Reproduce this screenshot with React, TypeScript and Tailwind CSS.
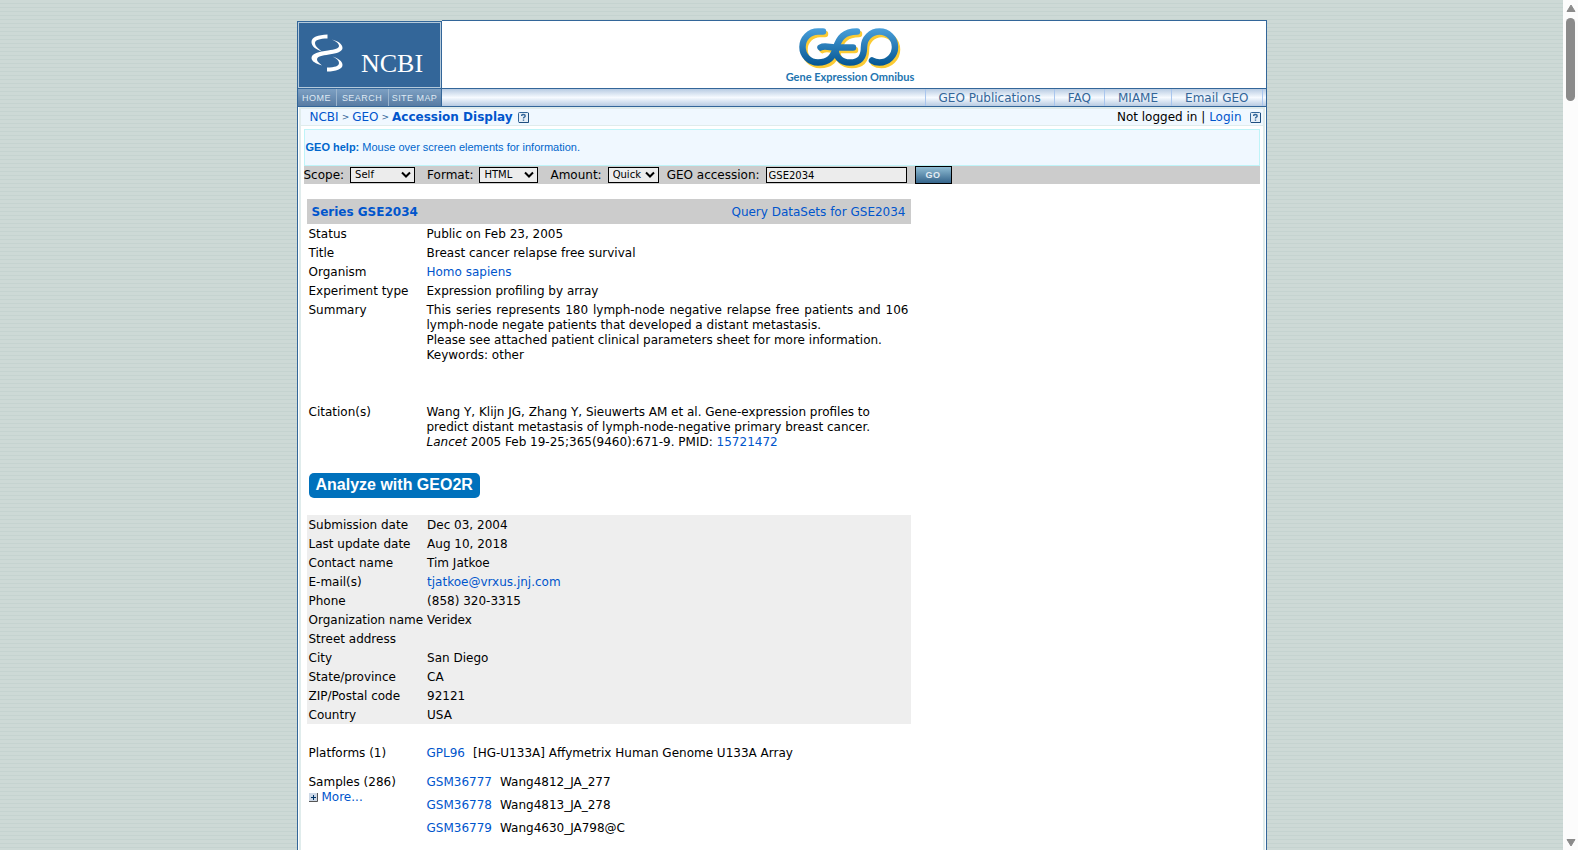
import type {ReactNode} from 'react';

type Row = {label: string; value: ReactNode};

const LINK = 'text-[#0055cc] hover:underline';

const seriesRows: Row[] = [
  {label: 'Status', value: 'Public on Feb 23, 2005'},
  {label: 'Title', value: 'Breast cancer relapse free survival'},
  {label: 'Organism', value: <a href="#organism" className={LINK}>Homo sapiens</a>},
  {label: 'Experiment type', value: 'Expression profiling by array'},
];

const contactRows: Row[] = [
  {label: 'Submission date', value: 'Dec 03, 2004'},
  {label: 'Last update date', value: 'Aug 10, 2018'},
  {label: 'Contact name', value: 'Tim Jatkoe'},
  {
    label: 'E-mail(s)',
    value: <a href="mailto:tjatkoe@vrxus.jnj.com" className={LINK}>tjatkoe@vrxus.jnj.com</a>,
  },
  {label: 'Phone', value: '(858) 320-3315'},
  {label: 'Organization name', value: 'Veridex'},
  {label: 'Street address', value: ''},
  {label: 'City', value: 'San Diego'},
  {label: 'State/province', value: 'CA'},
  {label: 'ZIP/Postal code', value: '92121'},
  {label: 'Country', value: 'USA'},
];

const samples = [
  {id: 'GSM36777', name: 'Wang4812_JA_277'},
  {id: 'GSM36778', name: 'Wang4813_JA_278'},
  {id: 'GSM36779', name: 'Wang4630_JA798@C'},
];

const menuLinks = ['GEO Publications', 'FAQ', 'MIAME', 'Email GEO'];

function HelpIcon() {
  return (
    <svg width="11" height="11" viewBox="0 0 11 11" aria-hidden="true">
      <rect x="0.5" y="0.5" width="10" height="10" rx="1" fill="#e6eff7" stroke="#336699"/>
      <path d="M1 10.5H10.5V1" fill="none" stroke="#1f4f7f"/>
      <path
        d="M3.700 4V3.200Q3.900 2.500 5.400 2.500Q7.200 2.500 7.200 3.900Q7.200 4.700 6.300 5.200Q5.500 5.600 5.500 6.600M5.500 7.600V8.800"
        fill="none"
        stroke="#336699"
        strokeWidth="1.4"
      />
    </svg>
  );
}

function NcbiLogo() {
  return (
    <a
      href="#ncbi"
      aria-label="NCBI"
      className="flex h-[66px] items-center border border-[#b5cadb] bg-[#336699]"
    >
      <svg width="141" height="64" viewBox="0 0 141 64" fill="none" aria-hidden="true">
        <g fill="#fff">
          <path d="M28.500 11.500C19 12 12.500 14 12.500 19C12.500 23.500 17 26.500 23 28.500C19 25.500 16 23 16 20C16 17 20.500 15.500 28.500 15.500Z"/>
          <path d="M33 16.500C37 18.500 40 20.500 40 23C40 25.500 36 26.500 29 27.500C20 28.500 12.500 30.500 12.500 35C12.500 38.500 17 40.500 23 42.500C20 40 18 38.500 18 36.500C18 33.500 23 32.500 30 31.500C38 30.500 43.500 28.500 43.500 25C43.500 21 39 18 33 16.500Z"/>
          <path d="M33.500 33.500C39 35.500 43.500 38 43.500 42C43.500 46 37 48.500 28 48.500V44.500C36 44.500 40 43 40 40C40 37.500 37.500 35.500 33.500 33.500Z"/>
        </g>
        <text x="62" y="49" fill="#fff" fontSize="26" fontFamily="Liberation Serif, serif">
          NCBI
        </text>
      </svg>
    </a>
  );
}

function GeoLogo() {
  const letters = (
    <>
      <path d="M48 6.500H43A15.500 15.500 0 1 0 43 37.500C54 37.500 58 32 61 23C64 13 69 6.500 82 6.500"/>
      <path d="M45.500 22.500C50 20 56 23 61 22.500H78"/>
      <path d="M61 22.500C59 31 66 37.500 75 37.500C86 37.500 89 31 89 22A15.500 15.500 0 1 1 104.500 37.500Q100 37.500 97 35.500"/>
    </>
  );
  return (
    <a href="#geo" aria-label="Gene Expression Omnibus">
      <svg width="150" height="60" viewBox="0 0 150 60" aria-hidden="true">
        <defs>
          <linearGradient id="geo" gradientUnits="userSpaceOnUse" x1="0" y1="3" x2="0" y2="41">
            <stop offset="0" stopColor="#4aa0db"/>
            <stop offset="1" stopColor="#045591"/>
          </linearGradient>
        </defs>
        <g fill="none" strokeWidth="6.5" strokeLinecap="round" strokeLinejoin="round">
          <g stroke="#fbcb33" transform="translate(2 2.500)">{letters}</g>
          <g stroke="url(#geo)">{letters}</g>
        </g>
        <text x="75" y="56" textAnchor="middle" fill="#2274b0" fontSize="11" fontWeight="700" fontFamily="Lato, sans-serif">
          Gene Expression Omnibus
        </text>
      </svg>
    </a>
  );
}

function InfoRow({label, value}: Row) {
  return (
    <tr>
      <th scope="row" className="w-[118px] whitespace-nowrap px-0.5 pt-[3px] pb-px text-left align-top font-normal">
        {label}
      </th>
      <td className="px-0.5 pt-[3px] pb-px align-top">{value}</td>
    </tr>
  );
}

function Header() {
  return (
    <header className="flex">
      <div className="mt-px w-[145px] shrink-0 border border-[#336699]">
        <NcbiLogo/>
        <nav className="flex h-[18px] border-t border-[#336699] bg-linear-to-b from-[#7da0c3] to-[#587ca3] font-['Liberation_Sans',sans-serif] text-[9px] leading-[18px] tracking-wider text-[#dfe9f3]">
          <a href="#home" className="w-[39px] border-r border-[#9ab4cd] text-center">HOME</a>
          <a href="#search" className="w-[52px] border-r border-[#9ab4cd] text-center">SEARCH</a>
          <a href="#map" className="flex-1 text-center">SITE MAP</a>
        </nav>
      </div>
      <div className="flex flex-1 flex-col border-y border-r border-[#336699] bg-white">
        <div className="flex flex-1 items-center justify-center pr-2">
          <GeoLogo/>
        </div>
        <nav className="flex h-[18px] justify-end border-t border-[#336699] bg-linear-to-b from-[#b8cbe2] via-[#f6faff] to-[#b8cbe2] leading-[19px] text-[#336699]">
          {menuLinks.map((label) => (
            <a key={label} href="#menu" className="border-l border-[#a9c6ee] px-[13px]">
              {label}
            </a>
          ))}
          <span className="w-1 border-l border-[#a9c6ee]"/>
        </nav>
      </div>
    </header>
  );
}

function Select({id, value, width}: {id: string; value: string; width: string}) {
  return (
    <span className={`relative h-4 ${width}`}>
      <select
        id={id}
        defaultValue={value}
        className="block h-4 w-full appearance-none border border-black bg-[#ececec] pl-1 text-[10px] leading-[14px]"
      >
        <option>{value}</option>
      </select>
      <svg className="pointer-events-none absolute right-1 top-1" width="10" height="8" viewBox="0 0 10 8" aria-hidden="true">
        <path d="M1 1.500L5 5.500L9 1.500" fill="none" stroke="#000" strokeWidth="2"/>
      </svg>
    </span>
  );
}

function Toolbar() {
  return (
    <form className="flex h-[18px] items-center bg-[#cccccc]" onSubmit={(e) => e.preventDefault()}>
      <label htmlFor="scope">Scope:</label>
      <Select id="scope" value="Self" width="w-[65px] ml-1.5"/>
      <label htmlFor="format" className="ml-3">Format:</label>
      <Select id="format" value="HTML" width="w-[59px] ml-1.5"/>
      <label htmlFor="amount" className="ml-3">Amount:</label>
      <Select id="amount" value="Quick" width="w-[51px] ml-1.5"/>
      <label htmlFor="accession" className="ml-2">GEO accession:</label>
      <input
        id="accession"
        defaultValue="GSE2034"
        className="ml-1.5 h-4 w-[141px] border border-black bg-[#ececec] px-0.5 text-[10px]"
      />
      <button
        type="submit"
        className="ml-2 h-[18px] w-[37px] border border-black bg-linear-to-b from-[#8fbcd3] to-[#35658b] font-['Liberation_Sans',sans-serif] text-[9px] font-bold leading-4 tracking-wider text-[#e4edf3]"
      >
        GO
      </button>
    </form>
  );
}

function SeriesTable() {
  return (
    <div className="mt-[15px] ml-[3px] w-[604px] max-w-full">
      <div className="flex h-[25px] items-center justify-between bg-[#cccccc] px-[5px] pt-px">
        <strong className="text-[#0055cc]">Series GSE2034</strong>
        <a href="#query" className={LINK}>Query DataSets for GSE2034</a>
      </div>
      <table className="w-full border-collapse">
        <tbody>
          {seriesRows.map((row) => <InfoRow key={row.label} {...row}/>)}
          <InfoRow
            label="Summary"
            value={
              <div className="pb-[38px] text-justify">
                This series represents 180 lymph-node negative relapse free patients and 106
                lymph-node negate patients that developed a distant metastasis.
                <br/>
                Please see attached patient clinical parameters sheet for more information.
                <br/>
                Keywords: other
              </div>
            }
          />
          <InfoRow
            label="Citation(s)"
            value={
              <div className="max-w-[460px]">
                Wang Y, Klijn JG, Zhang Y, Sieuwerts AM et al. Gene-expression profiles to predict
                distant metastasis of lymph-node-negative primary breast cancer. <em>Lancet</em>{' '}
                2005 Feb 19-25;365(9460):671-9. PMID:{' '}
                <a href="#pmid" className={LINK}>15721472</a>
              </div>
            }
          />
        </tbody>
      </table>
      <button
        type="button"
        className="mt-[22px] ml-0.5 block h-[25px] rounded-[5px] bg-[#0071bc] px-[7px] pb-0.5 font-['Liberation_Sans',sans-serif] text-base font-bold leading-[22px] text-white"
      >
        Analyze with GEO2R
      </button>
      <table className="mt-[17px] w-full border-collapse bg-[#eeeeee]">
        <tbody>
          {contactRows.map((row) => <InfoRow key={row.label} {...row}/>)}
        </tbody>
      </table>
      <table className="mt-[19px] w-full border-collapse">
        <tbody>
          <InfoRow
            label="Platforms (1)"
            value={
              <div className="flex gap-2 pb-2.5">
                <a href="#gpl96" className={LINK}>GPL96</a>
                <span>[HG-U133A] Affymetrix Human Genome U133A Array</span>
              </div>
            }
          />
          <tr>
            <th scope="row" className="w-[118px] px-0.5 pt-[3px] pb-px text-left align-top font-normal">
              Samples (286)
              <a href="#more" className={`flex items-center gap-1 ${LINK}`}>
                <svg width="9" height="9" viewBox="0 0 9 9" aria-hidden="true">
                  <path fill="#cdd8e6" d="M0 0H9V9H0Z"/>
                  <path d="M0 8.500H8.500V0" fill="none" stroke="#555"/>
                  <path d="M4.500 2V7M2 4.500H7" stroke="#003366"/>
                </svg>
                More...
              </a>
            </th>
            <td className="px-0.5 pt-[3px] pb-px align-top">
              <ul className="flex flex-col gap-2">
                {samples.map(({id, name}) => (
                  <li key={id} className="flex gap-2">
                    <a href="#sample" className={LINK}>{id}</a>
                    <span>{name}</span>
                  </li>
                ))}
              </ul>
            </td>
          </tr>
        </tbody>
      </table>
    </div>
  );
}

function Scrollbar() {
  return (
    <div className="flex w-[15px] shrink-0 flex-col items-center bg-[#fcfcfc] pt-1 pb-[3px]" aria-hidden="true">
      <svg width="10" height="8" viewBox="0 0 10 8">
        <path d="M5 1L9 7.500H1Z" fill="#8b8b8b" stroke="#8b8b8b" strokeLinejoin="round"/>
      </svg>
      <div className="mt-1.5 h-[83px] w-[9px] rounded-full bg-[#8b8b8b]"/>
      <svg className="mt-auto" width="10" height="8" viewBox="0 0 10 8">
        <path d="M5 7L9 0.500H1Z" fill="#8b8b8b" stroke="#8b8b8b" strokeLinejoin="round"/>
      </svg>
    </div>
  );
}

export default function App() {
  return (
    <div className="flex h-screen overflow-hidden bg-[repeating-linear-gradient(to_bottom,#cdd9d6_0px,#cdd9d6_3px,#c5d3d0_3px,#c5d3d0_4px)] font-['DejaVu_Sans',sans-serif] text-xs leading-[15px] text-black">
      <div className="flex flex-1 justify-center pt-5">
        <div className="flex w-full max-w-[970px] flex-col">
          <Header/>
          <main className="flex-1 border-x border-[#336699] bg-white px-px">
            <div className="h-full border-x-2 border-t-2 border-[#e0ecec]">
              <div className="flex h-[17px] items-center border-b border-[#e0ecec] bg-[#f0f8ff] pt-px pl-[9px] pr-0.5">
                <nav className="flex items-center gap-[3px]">
                  <a href="#ncbi" className={LINK}>NCBI</a>
                  <span className="text-[9px] text-[#336699]">&gt;</span>
                  <a href="#geo" className={LINK}>GEO</a>
                  <span className="text-[9px] text-[#336699]">&gt;</span>
                  <strong className="text-[#0055cc]">Accession Display</strong>
                  <a href="#help" aria-label="Help" className="ml-0.5"><HelpIcon/></a>
                </nav>
                <div className="ml-auto flex items-center gap-2">
                  <span>Not logged in | <a href="#login" className={LINK}>Login</a></span>
                  <a href="#login-help" aria-label="Login help"><HelpIcon/></a>
                </div>
              </div>
              <div className="px-[3px] pt-[3px]">
                <p className="flex h-[37px] items-center border border-[#bff4f8] bg-[#f0f8ff] pl-px font-['Liberation_Sans',sans-serif] text-[11px] text-[#0066cc]">
                  <span><strong>GEO help:</strong> Mouse over screen elements for information.</span>
                </p>
                <Toolbar/>
                <SeriesTable/>
              </div>
            </div>
          </main>
        </div>
      </div>
      <Scrollbar/>
    </div>
  );
}
